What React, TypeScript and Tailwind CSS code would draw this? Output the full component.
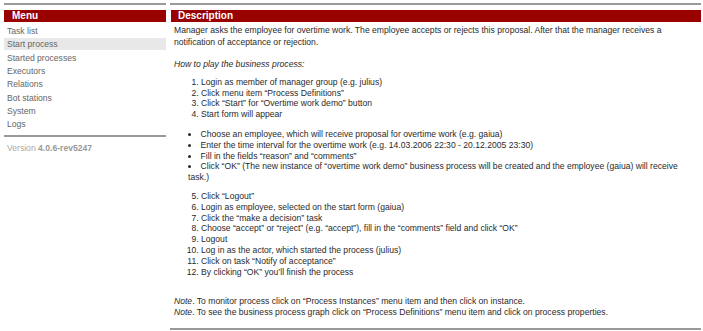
import React from "react";

const menu = [
  "Task list",
  "Start process",
  "Started processes",
  "Executors",
  "Relations",
  "Bot stations",
  "System",
  "Logs",
];

export default function App() {
  return (
    <div className="flex gap-[4px] pl-[4px] pr-[2px] pt-[3px] font-['Liberation_Sans',Arial,sans-serif] text-[8.6px] bg-white w-[703px] h-[331px] overflow-hidden">
      <div className="w-[162px] shrink-0">
        <div className="border-t-2 border-[#999]" />
        <div className="mt-[5px] h-[12px] bg-[#990000] text-white font-bold text-[10px] leading-[12px] pl-[8px]">
          Menu
        </div>
        <div className="mt-[3px] flex flex-col gap-[1.33px]">
          {menu.map((m, i) => (
            <div
              key={m}
              className={
                "h-[12px] leading-[12px] pl-[3px] text-[#666] " +
                (i === 1 ? "bg-[#e8e8e8]" : "")
              }
            >
              {m}
            </div>
          ))}
        </div>
        <div className="mt-[5px] border-t-2 border-[#999]" />
        <div className="mt-[6px] pl-[3px] leading-[11px] text-[#aaa]">
          Version <span className="font-bold text-[#999]">4.0.6-rev5247</span>
        </div>
      </div>
      <div className="flex-1">
        <div className="border-t-2 border-[#999]" />
        <div className="mt-[5px] ml-[1px] h-[12px] bg-[#990000] text-white font-bold text-[10px] leading-[12px] pl-[7px]">
          Description
        </div>
        <div className="px-[4px] text-[#2a2a2a] leading-[10.8px]">
          <p className="mt-[3px] leading-[11.5px]">
            Manager asks the employee for overtime work. The employee accepts or rejects this proposal. After that the manager receives a notification of acceptance or rejection.
          </p>
          <p className="mt-[11px] italic">How to play the business process:</p>
          <ol className="mt-[7px] list-decimal pl-[27px]">
            <li>Login as member of manager group (e.g. julius)</li>
            <li>Click menu item “Process Definitions”</li>
            <li>Click “Start” for “Overtime work demo” button</li>
            <li>Start form will appear</li>
          </ol>
          <ul className="mt-[9px] list-disc list-inside pl-[14px]">
            <li>Choose an employee, which will receive proposal for overtime work (e.g. gaiua)</li>
            <li>Enter the time interval for the overtime work (e.g. 14.03.2006 22:30 - 20.12.2005 23:30)</li>
            <li>Fill in the fields “reason” and “comments”</li>
            <li>Click “OK” (The new instance of “overtime work demo” business process will be created and the employee (gaiua) will receive task.)</li>
          </ul>
          <ol start={5} className="mt-[8px] list-decimal pl-[27px]">
            <li>Click “Logout”</li>
            <li>Login as employee, selected on the start form (gaiua)</li>
            <li>Click the “make a decision” task</li>
            <li>Choose “accept” or “reject” (e.g. “accept”), fill in the “comments” field and click “OK”</li>
            <li>Logout</li>
            <li>Log in as the actor, which started the process (julius)</li>
            <li>Click on task “Notify of acceptance”</li>
            <li>By clicking “OK” you’ll finish the process</li>
          </ol>
          <p className="mt-[19px]">
            <i>Note</i>. To monitor process click on “Process Instances” menu item and then click on instance.
          </p>
          <p>
            <i>Note</i>. To see the business process graph click on “Process Definitions” menu item and click on process properties.
          </p>
        </div>
        <div className="mt-[10px] border-t-2 border-[#999]" />
      </div>
    </div>
  );
}
